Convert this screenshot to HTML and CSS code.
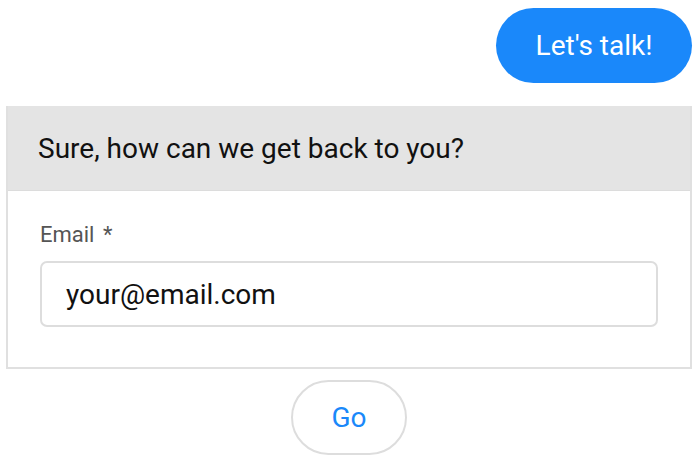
FILE: index.html
```html
<!DOCTYPE html>
<html lang="en">
<head>
  <meta charset="UTF-8">
  <title>Chat</title>
  <link rel="stylesheet" href="styles.css">
</head>
<body>

<div class="chat">
  <div class="bubble-row">
    <div class="bubble">Let's talk!</div>
  </div>

  <div class="panel">
    <div class="panel-head">Sure, how can we get back to you?</div>
    <div class="panel-body">
      <label class="field-label" for="email">Email <span class="req">*</span></label>
      <div class="field">your@email.com</div>
    </div>
  </div>

  <div class="actions">
    <button class="go">Go</button>
  </div>
</div>

</body>
</html>
```

FILE: styles.css
```css
body {
  font-family: Roboto, "Liberation Sans", sans-serif;
  background: #fff;
  margin: 0;
  padding: 8px 6px 0;
}
.bubble-row { display: flex; justify-content: flex-end; }
.bubble {
  background: #1a88fa;
  color: #fff;
  font-size: 28px;
  width: 196px; height: 75px;
  border-radius: 38px;
  display: flex; align-items: center; justify-content: center;
}
.panel { margin-top: 23px; border: 2px solid #e0e0e0; border-top: none; }
.panel-head {
  background: #e4e4e4;
  height: 84px;
  display: flex; align-items: center;
  padding-left: 30px;
  font-size: 28px;
  color: #111;
  border-bottom: 1px solid #dcdcdc;
}
.panel-body { padding: 31px 32px 40px; }
.field-label { display: block; font-size: 22px; line-height: 26px; color: #555; }
.field-label .req { margin-left: 3px; }
.field {
  margin-top: 13px;
  height: 62px;
  border: 2px solid #ddd;
  border-radius: 7px;
  display: flex; align-items: center;
  padding-left: 24px;
  font-size: 28px;
  color: #111;
}
.actions { display: flex; justify-content: center; margin-top: 11px; }
.go {
  width: 116px; height: 75px;
  border: 2px solid #ddd;
  border-radius: 38px;
  background: #fff;
  color: #1a88fa;
  font-family: inherit;
  font-size: 28px;
}
```
